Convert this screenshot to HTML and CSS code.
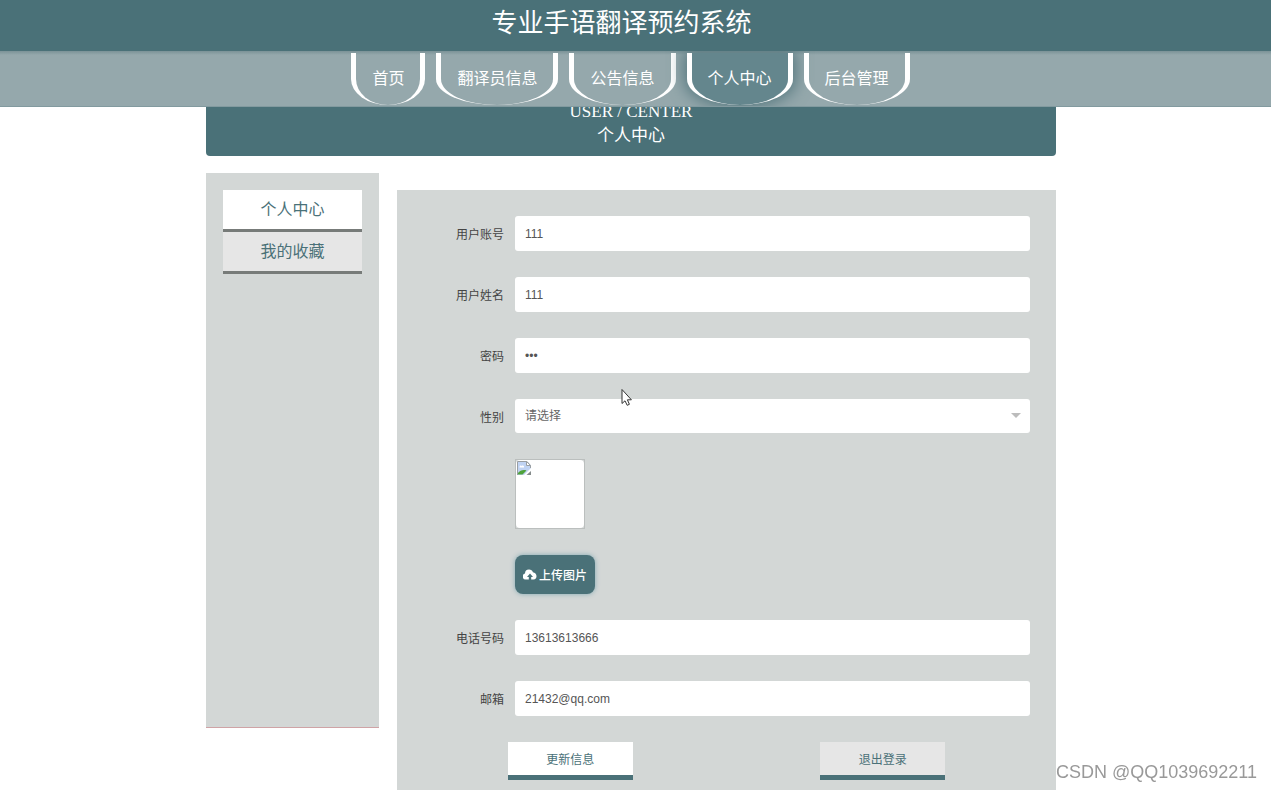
FILE: index.html
```html
<!DOCTYPE html>
<html lang="zh-CN">
<head>
<meta charset="utf-8">
<meta name="viewport" content="width=device-width, initial-scale=1">
<title>专业手语翻译预约系统</title>
<link rel="stylesheet" href="styles.css">
</head>
<body>
<header class="top">
  <h1 class="title">专业手语翻译预约系统</h1>
  <nav class="nav">
    <a class="nav-item" href="#home">首页</a>
    <a class="nav-item" href="#translators">翻译员信息</a>
    <a class="nav-item" href="#notices">公告信息</a>
    <a class="nav-item active" href="#center">个人中心</a>
    <a class="nav-item" href="#admin">后台管理</a>
  </nav>
</header>
<main class="page">
  <div class="banner">
    <p class="banner-line">USER / CENTER</p>
    <h2 class="banner-line">个人中心</h2>
  </div>
  <div class="columns">
    <aside class="side">
      <a class="side-item current" href="#center">个人中心</a>
      <a class="side-item" href="#favorites">我的收藏</a>
    </aside>
    <form class="panel">
      <div class="row">
        <label class="label" for="account">用户账号</label>
        <input class="field" id="account" type="text" value="111">
      </div>
      <div class="row">
        <label class="label" for="name">用户姓名</label>
        <input class="field" id="name" type="text" value="111">
      </div>
      <div class="row">
        <label class="label" for="password">密码</label>
        <input class="field" id="password" type="password" value="111" autocomplete="off">
      </div>
      <div class="row">
        <label class="label" for="gender">性别</label>
        <div class="select-wrap">
          <select class="field select" id="gender">
            <option>请选择</option>
            <option>男</option>
            <option>女</option>
          </select>
          <span class="caret"></span>
        </div>
      </div>
      <div class="row">
        <span class="label"></span>
        <div class="photo">
          <div class="photo-inner">
            <svg width="16" height="16" viewBox="0 0 16 16" aria-hidden="true">
              <path d="M1.500 1.500H11l4 4V8l-7 7H1.500z" fill="#c0d3f3"/>
              <path d="M3.500 7c0-1.500 1.500-2 2.200-1C7 5 8.500 6 8 7.500H3.500z" fill="#fff"/>
              <path d="M2 14.500V13c2-2.500 5-3.500 8.500-2.500l-4 4z" fill="#4ea23a"/>
              <path d="M1.500 15V1.500H11l3.500 4V8" fill="none" stroke="#9a9fa3"/>
              <path d="M10.500 1.500v4h4z" fill="#fff" stroke="#9a9fa3"/>
              <path d="M15 11v4h-4.500z" fill="#858b8b"/>
            </svg>
          </div>
        </div>
      </div>
      <div class="row">
        <span class="label"></span>
        <button class="upload" type="button">
          <svg width="14" height="11" viewBox="0 0 14 11" aria-hidden="true">
            <path fill="#fff" fill-rule="evenodd" d="M3 10.500A3 3 0 0 1 2 4.600 4 4 0 0 1 6 .6c2 0 3.400 1 3.900 2.600C12 3.400 13.500 5 13.500 7A3.400 3.400 0 0 1 10.500 10.500H8.200V8H10L7 4.500 4 8h1.800v2.500z"/>
          </svg>
          <span>上传图片</span>
        </button>
      </div>
      <div class="row">
        <label class="label" for="phone">电话号码</label>
        <input class="field" id="phone" type="text" value="13613613666">
      </div>
      <div class="row">
        <label class="label" for="email">邮箱</label>
        <input class="field" id="email" type="text" value="21432@qq.com">
      </div>
      <div class="actions">
        <button class="action primary" type="button">更新信息</button>
        <button class="action" type="button">退出登录</button>
      </div>
    </form>
  </div>
</main>
<div class="watermark">CSDN @QQ1039692211</div>
<svg class="pointer" width="12" height="18" viewBox="0 0 12 18" aria-hidden="true">
  <path d="M1 1.500v14l3-2.700 2.200 4.500 2.200-1-2-4.500h4z" fill="#fff" stroke="#333"/>
</svg>
</body>
</html>
```

FILE: styles.css
```css
* {
  box-sizing: border-box;
}

body {
  margin: 0;
  padding-right: 9px;
  background: #fff;
  font-family: "Liberation Sans", "Noto Sans CJK SC", sans-serif;
  font-size: 12px;
  font-weight: 400;
  color: #444;
}

a {
  text-decoration: none;
}

.top {
  position: fixed;
  top: 0;
  left: 0;
  right: 0;
  z-index: 2;
}

.title {
  margin: 0;
  padding: 1px 28px 6px 0;
  background: #4a7178;
  color: #fff;
  font-size: 26px;
  font-weight: 400;
  line-height: 44px;
  text-align: center;
}

.nav {
  display: flex;
  justify-content: center;
  gap: 11px;
  padding: 2px 10px 1px 0;
  overflow: hidden;
  background: linear-gradient(#7b9297, #95a8ac 4px);
  border-bottom: 1px solid #829a9f;
}

.nav-item {
  padding: 0 16px;
  border: solid #fff;
  border-width: 0 5px;
  border-radius: 0 0 50% 50%;
  color: #fff;
  font-size: 16px;
  line-height: 52px;
}

.nav-item.active {
  background: #64868d;
  box-shadow: 0 0 16px 3px #55777e;
}

.page {
  display: flex;
  flex-direction: column;
  max-width: 850px;
  min-height: 100vh;
  margin: 0 auto;
  padding-top: 90px;
}

.banner {
  padding: 10px 0 8px;
  border-radius: 0 0 4px 4px;
  background: #4a7178;
  color: #fff;
  text-align: center;
}

.banner-line {
  margin: 0;
  font-family: "Liberation Serif", "Noto Sans CJK SC", serif;
  font-size: 17px;
  font-weight: 400;
  line-height: 24px;
}

.columns {
  display: flex;
  flex: 1;
  gap: 18px;
  padding-top: 17px;
}

.side {
  flex: 0 0 173px;
  align-self: flex-start;
  min-height: 555px;
  padding: 17px;
  background: #d3d7d6;
  border-bottom: 1px solid #cfa3a6;
}

.side-item {
  display: block;
  border-bottom: 3px solid #777b79;
  background: #e6e6e6;
  color: #4a7178;
  font-size: 16px;
  line-height: 39px;
  text-align: center;
}

.side-item.current {
  background: #fff;
}

.panel {
  display: flex;
  flex: 1;
  flex-direction: column;
  gap: 26px;
  margin-top: 17px;
  padding: 26px 17px 11px;
  background: #d3d7d6;
}

.row {
  display: flex;
  align-items: center;
  gap: 11px;
  padding-right: 9px;
}

.label {
  flex: 0 0 90px;
  text-align: right;
}

.field {
  flex: 1;
  width: 100%;
  min-width: 0;
  height: 35px;
  padding: 0 10px;
  border: 0;
  border-radius: 3px;
  background: #fff;
  color: #555;
  font: inherit;
}

.select-wrap {
  position: relative;
  flex: 1;
}

.select {
  display: block;
  height: 34px;
  color: #666;
  appearance: none;
}

.caret {
  position: absolute;
  top: 14px;
  right: 9px;
  border: solid transparent;
  border-width: 5px 5px 0;
  border-top-color: #bcbcbc;
  pointer-events: none;
}

.photo {
  width: 70px;
  height: 70px;
  border: 1px solid #bbbfbe;
}

.photo-inner {
  height: 100%;
  border-radius: 4px;
  background: #fff;
}

.photo-inner svg {
  display: block;
}

.upload {
  display: flex;
  align-items: center;
  gap: 2px;
  height: 39px;
  padding: 0 8px;
  border: 0;
  border-radius: 8px;
  background: #4a7178;
  box-shadow: 0 0 5px #83a9b3;
  color: #fff;
  font: inherit;
  font-weight: 500;
}

.actions {
  display: flex;
  justify-content: space-around;
}

.action {
  width: 125px;
  height: 38px;
  border: 0;
  border-bottom: 5px solid #4a7178;
  background: #e6e6e6;
  color: #4a7178;
  font: inherit;
}

.action.primary {
  background: #fff;
}

.watermark {
  position: fixed;
  right: 14px;
  bottom: 8px;
  z-index: 3;
  color: #999;
  font-size: 18px;
  line-height: 20px;
}

.pointer {
  position: absolute;
  top: 388px;
  left: 621px;
  z-index: 3;
}
```
